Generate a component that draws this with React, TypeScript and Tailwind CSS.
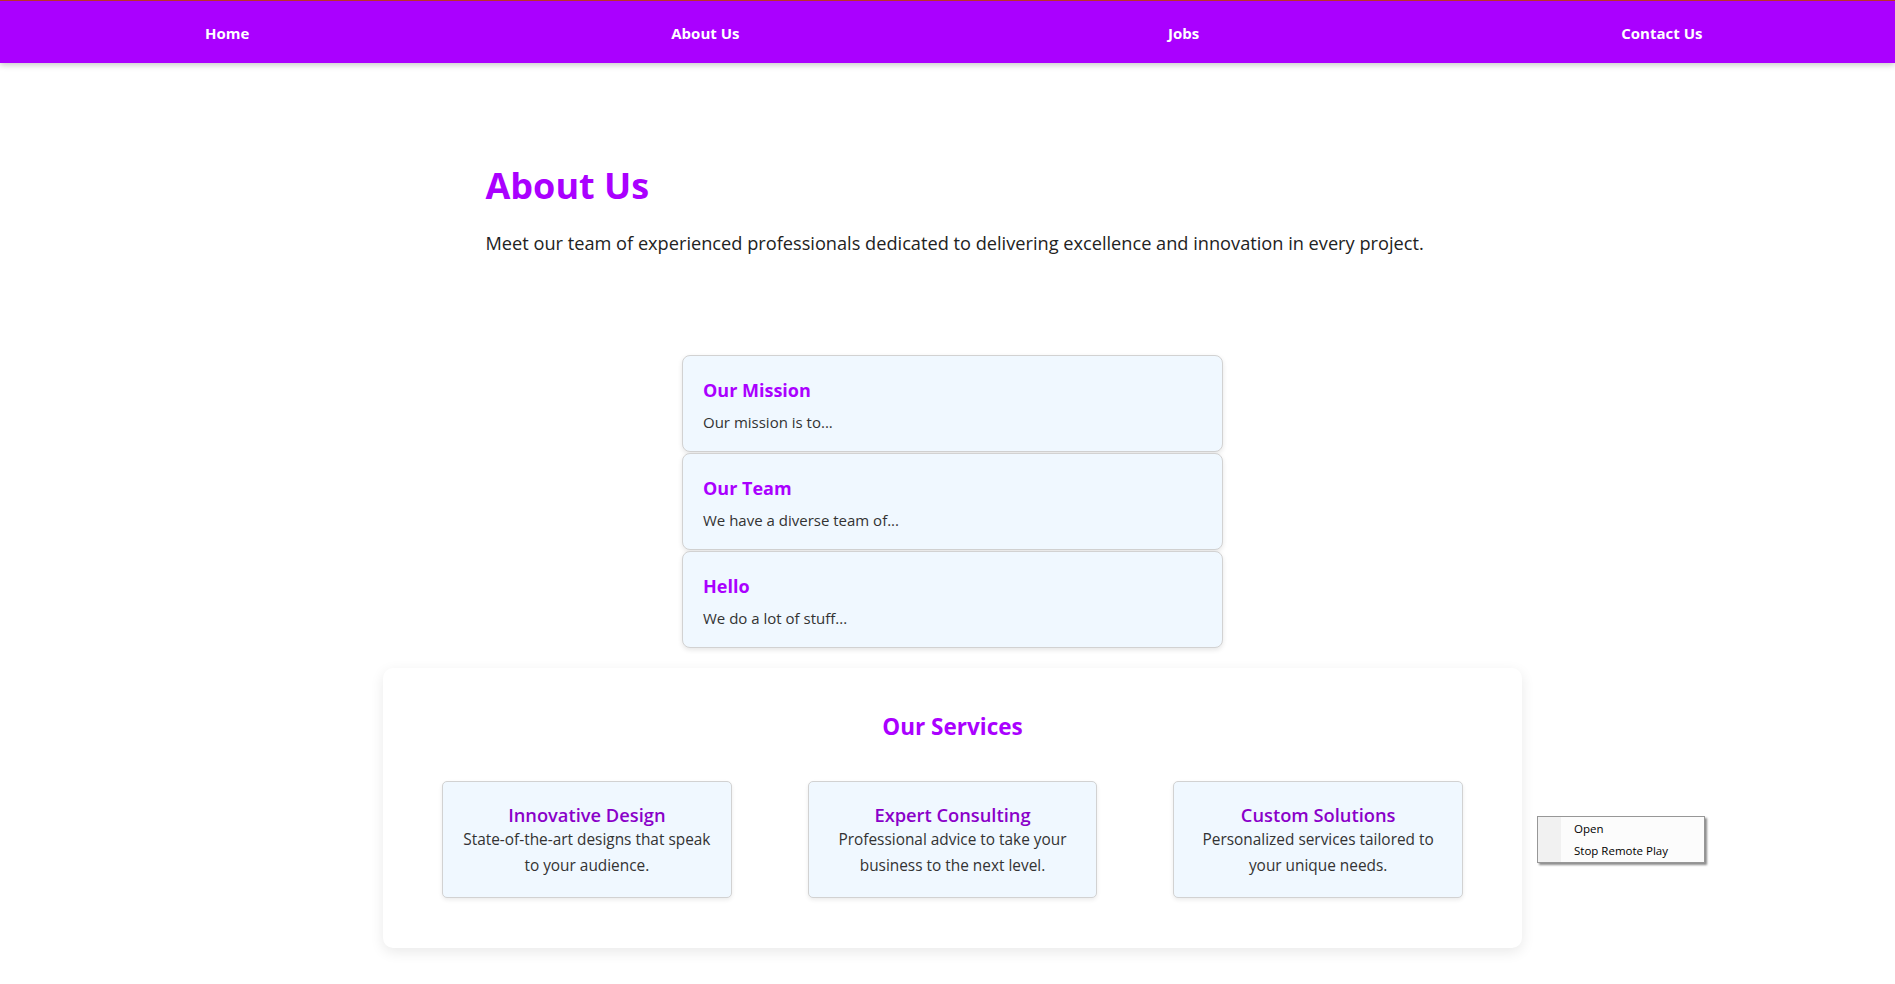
import React from "react";

const font = "font-['Open_Sans','Noto_Sans',sans-serif]";

const cards = [
  { title: "Our Mission", body: "Our mission is to..." },
  { title: "Our Team", body: "We have a diverse team of..." },
  { title: "Hello", body: "We do a lot of stuff..." },
];

const services = [
  { title: "Innovative Design", body: "State-of-the-art designs that speak to your audience." },
  { title: "Expert Consulting", body: "Professional advice to take your business to the next level." },
  { title: "Custom Solutions", body: "Personalized services tailored to your unique needs." },
];

export default function App() {
  return (
    <div className={`relative min-h-screen bg-white ${font}`}>
      <nav className="h-[63px] overflow-hidden bg-[#aa00ff] border-t border-[#b8322c] shadow-[0_2px_6px_rgba(0,0,0,0.22)]">
        <ul className="grid h-full w-[calc(100%+18px)] -ml-[12px] grid-cols-4 items-center pt-[2px]">
          {["Home", "About Us", "Jobs", "Contact Us"].map((l) => (
            <li key={l} className="text-center text-[15px] font-bold text-white">
              {l}
            </li>
          ))}
        </ul>
      </nav>

      <section className="mx-auto max-w-[960px] pl-[18px] pt-[101px]">
        <h1 className="text-[36px] font-bold leading-[43px] text-[#aa00ff]">About Us</h1>
        <p className="mt-[22px] text-[18.2px] leading-[28px] text-[#222]">
          Meet our team of experienced professionals dedicated to delivering excellence and innovation in every project.
        </p>
      </section>

      <div className="pl-[10px] pt-[98px]">
        <div className="mx-auto flex w-[541px] flex-col gap-[1px]">
          {cards.map((c) => (
            <div
              key={c.title}
              className="rounded-[8px] border border-[#d2d2d2] bg-[#f0f8ff] px-[20px] pt-[19px] pb-[17px] shadow-[0_2px_5px_rgba(0,0,0,0.1)]"
            >
              <h3 className="text-[18px] font-bold leading-[30px] text-[#aa00ff]">{c.title}</h3>
              <p className="mt-[5px] text-[15px] leading-[24px] text-[#333]">{c.body}</p>
            </div>
          ))}
        </div>

        <div className="mx-auto mt-[20px] w-[1139px] rounded-[10px] bg-white px-[59px] pt-[44px] pb-[50px] shadow-[0_4px_14px_rgba(0,0,0,0.09)]">
          <h2 className="text-center text-[22.5px] font-bold leading-[29px] text-[#aa00ff]">Our Services</h2>
          <div className="mt-[40px] grid grid-cols-3 gap-[76px]">
            {services.map((s) => (
              <div
                key={s.title}
                className="rounded-[5px] border border-[#d2d2d2] bg-[#f0f8ff] px-[14px] pt-[21px] pb-[18px] text-center shadow-[0_2px_4px_rgba(0,0,0,0.08)]"
              >
                <h3 className="text-[18.3px] font-semibold leading-[24px] text-[#8a00c9]">{s.title}</h3>
                <p className="text-[15.4px] leading-[26px] text-[#333]">{s.body}</p>
              </div>
            ))}
          </div>
        </div>
      </div>

      <div className="absolute left-[1537px] top-[816px] flex h-[47px] w-[168px] border border-[#979797] bg-[#fcfcfc] shadow-[2px_2px_2px_rgba(0,0,0,0.45)]">
        <div className="w-[23px] bg-[#f1f1f1]" />
        <div className="flex flex-col pl-[13px] pt-[1px] text-[11.5px] leading-[22px] text-black">
          <span>Open</span>
          <span>Stop Remote Play</span>
        </div>
      </div>
    </div>
  );
}
